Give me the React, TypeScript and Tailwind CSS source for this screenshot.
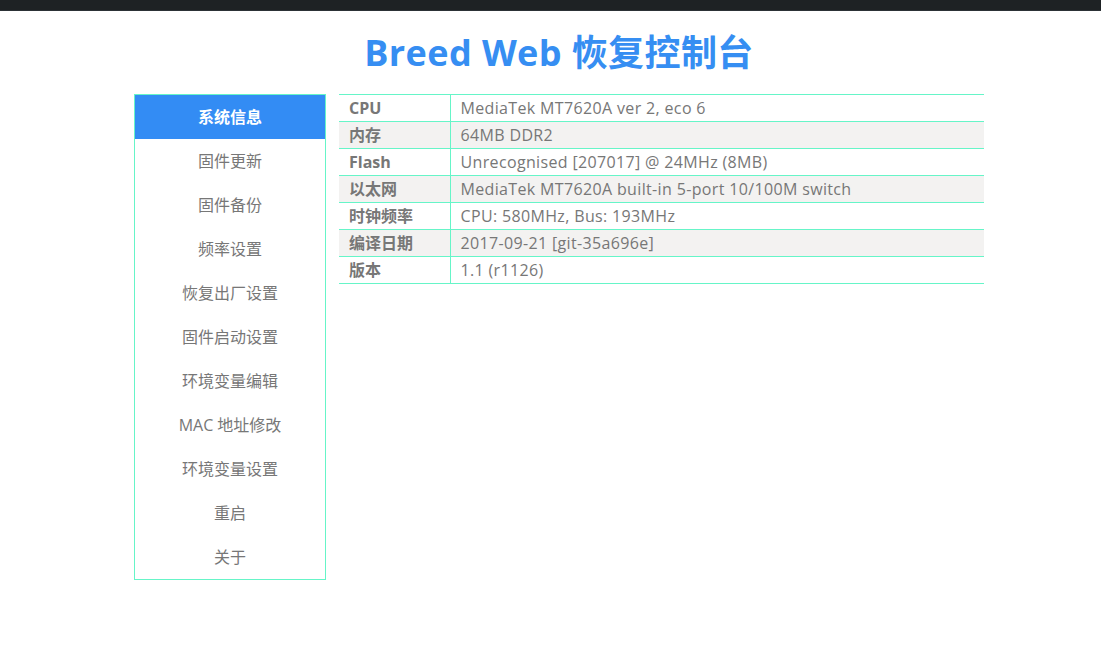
const menu = [
  "系统信息",
  "固件更新",
  "固件备份",
  "频率设置",
  "恢复出厂设置",
  "固件启动设置",
  "环境变量编辑",
  "MAC 地址修改",
  "环境变量设置",
  "重启",
  "关于",
];

const info: [string, string][] = [
  ["CPU", "MediaTek MT7620A ver 2, eco 6"],
  ["内存", "64MB DDR2"],
  ["Flash", "Unrecognised [207017] @ 24MHz (8MB)"],
  ["以太网", "MediaTek MT7620A built-in 5-port 10/100M switch"],
  ["时钟频率", "CPU: 580MHz, Bus: 193MHz"],
  ["编译日期", "2017-09-21 [git-35a696e]"],
  ["版本", "1.1 (r1126)"],
];

export default function App() {
  return (
    <div
      className="min-h-[669px] bg-white text-[#777]"
      style={{ fontFamily: '"Open Sans", "Noto Sans CJK SC", sans-serif' }}
    >
      <div className="h-[11px] bg-[#1e2224] border-b border-[#2c3236]" />
      <div className="ml-[134px] w-[850px]">
        <h1 className="h-[83px] pt-[16px] text-center text-[36px] font-bold leading-[52px] tracking-[0.4px] text-[#368ef2]">
          Breed Web 恢复控制台
        </h1>
        <div className="flex items-start gap-[13px]">
          <ul className="w-[192px] shrink-0 border border-[#66f5c8]">
            {menu.map((m, i) => (
              <li
                key={m}
                className={
                  i === 0
                    ? "h-[44px] flex items-center justify-center bg-[#338cf4] text-white font-bold text-[16px]"
                    : "h-[44px] flex items-center justify-center text-[16px]"
                }
              >
                {m}
              </li>
            ))}
          </ul>
          <table className="w-[645px] border-collapse text-[16px]">
            <tbody>
              {info.map(([k, v], i) => (
                <tr
                  key={k}
                  className={i % 2 === 1 ? "bg-[#f3f2f1]" : "bg-white"}
                >
                  <td className="h-[27px] w-[111px] border-y border-r border-[#66f5c8] pl-[10px] font-bold leading-none">
                    {k}
                  </td>
                  <td className="h-[27px] border-y border-[#66f5c8] pl-[10px] leading-none tracking-[0.35px]">
                    {v}
                  </td>
                </tr>
              ))}
            </tbody>
          </table>
        </div>
      </div>
    </div>
  );
}
